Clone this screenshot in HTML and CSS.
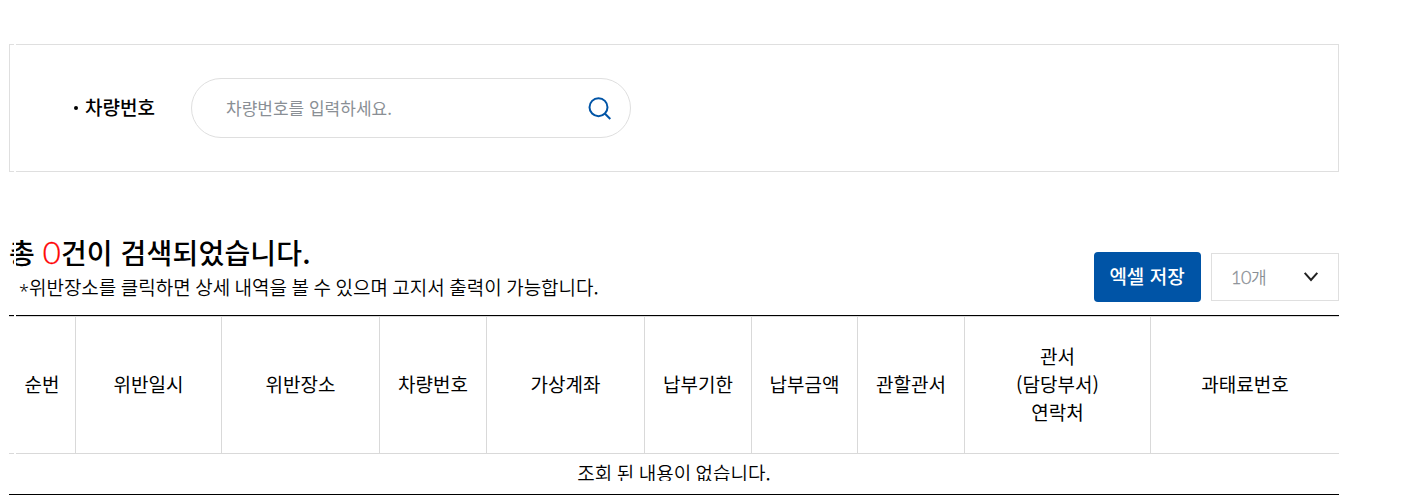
FILE: index.html
```
<!DOCTYPE html>
<html lang="ko">
<head>
<meta charset="utf-8">
<title>위반내역 조회</title>
<link rel="stylesheet" href="styles.css">
</head>
<body>
<main class="page">
  <form class="search">
    <label class="search-label" for="car">차량번호</label>
    <div class="search-field">
      <input class="search-input" id="car" type="text" placeholder="차량번호를 입력하세요.">
      <svg class="search-icon" width="24" height="24" viewBox="0 0 24 24" fill="none" stroke="#0054a6" stroke-width="2"><circle cx="10.5" cy="11.2" r="9"/><path d="M16.8 17.5l5.5 5.5"/></svg>
    </div>
  </form>
  <section class="toolbar">
    <div class="summary">
      <h1 class="total">총 <span class="count">0</span>건이 검색되었습니다.</h1>
      <p class="note"><span class="star">*</span>위반장소를 클릭하면 상세 내역을 볼 수 있으며 고지서 출력이 가능합니다.</p>
    </div>
    <div class="actions">
      <button class="excel" type="button">엑셀 저장</button>
      <div class="page-size"><span><span class="number">10</span>개</span>
        <svg width="16" height="12" viewBox="0 0 16 12" fill="none" stroke="#222" stroke-width="2"><path d="M1.7 1.8L8 8.9l6.3-7.1"/></svg>
      </div>
    </div>
  </section>
  <div class="table">
    <div class="head">
      <div>순번</div><div>위반일시</div><div>위반장소</div><div>차량번호</div><div>가상계좌</div><div>납부기한</div><div>납부금액</div><div>관할관서</div><div>관서<br>(담당부서)<br>연락처</div><div>과태료번호</div>
    </div>
    <div class="empty"><p class="empty-text">조회 된 내용이 없습니다.</p></div>
  </div>
  <div class="seam"></div>
</main>
</body>
</html>
```
FILE: styles.css
```
* { box-sizing: border-box; }
body { margin: 0; background: #fff; color: #000; font: 400 19px/28px "Noto Sans CJK KR", sans-serif; overflow: hidden; }
.page { position: relative; width: 1339px; padding: 44px 0 0 9px; }
.search { display: flex; align-items: center; height: 128px; padding-left: 64px; border: 1px solid #dfdfdf; }
.search-label { display: flex; align-items: center; width: 117px; padding-bottom: 2px; font-weight: 500; }
.search-label::before { content: ""; width: 4px; height: 4px; margin: 2px 7px 0 0; border-radius: 50%; background: #000; }
.search-field { display: flex; align-items: center; width: 440px; height: 60px; padding: 0 18px 0 34px; border: 1px solid #dfdfdf; border-radius: 30px; }
.search-input { flex: 1; min-width: 0; padding: 0; border: 0; outline: 0; background: none; font: 400 17px/28px "Noto Sans CJK KR", sans-serif; }
.search-input::placeholder { color: #8a8f95; opacity: 1; }
.search-icon { flex: none; }
.toolbar { display: flex; justify-content: space-between; height: 143px; padding-top: 60px; }
.total { margin: 0; font-size: 28px; line-height: 40px; font-weight: 500; letter-spacing: 0.2px; word-spacing: -0.3px; white-space: nowrap; }
.count { color: #f00; font-family: Lato, sans-serif; font-weight: 300; font-size: 31px; line-height: 1; -webkit-text-stroke: 0.35px #f00; }
.note { margin: 1px 0 0; padding-left: 10px; font-weight: 350; word-spacing: -0.85px; white-space: nowrap; }
.star { font-family: "Noto Sans", sans-serif; font-size: 18px; line-height: 1; vertical-align: -3px; }
.actions { display: flex; gap: 10px; padding-top: 20px; }
.excel { width: 107px; height: 50px; padding: 0 1px 2px 0; border: 0; border-radius: 4px; background: #0054a6; color: #fff; font: 500 19px/28px "Noto Sans CJK KR", sans-serif; }
.page-size { display: flex; align-items: center; justify-content: space-between; width: 128px; height: 48px; margin-top: 1px; padding: 0 19px; border: 1px solid #dfdfdf; color: #8a8f95; font-size: 17px; font-weight: 350; }
.number { font-family: Lato, sans-serif; font-size: 18px; font-weight: 300; letter-spacing: -0.5px; -webkit-text-stroke: 0.3px #8a8f95; }
.table { height: 180px; border-top: 1px solid #000; border-bottom: 1px solid #000; }
.head { display: grid; grid-template-columns: 67px 146px 158px 107px 158px 107px 106px 107px 186px 188px; height: 138px; border-top: 1px solid #d9d9d9; border-bottom: 1px solid #d9d9d9; text-align: center; }
.head > div { display: flex; align-items: center; justify-content: center; padding-bottom: 2px; border-right: 1px solid #d9d9d9; }
.head > div:last-child { border-right: 0; }
.empty { height: 27px; padding-top: 5px; overflow: hidden; text-align: center; }
.empty-text { margin: 0; font-weight: 350; word-spacing: -0.85px; }
/* Thin strip over the left edge of the content */
.seam { position: absolute; left: 14px; top: 0; width: 2px; height: 480px; background: #fff; }
```
